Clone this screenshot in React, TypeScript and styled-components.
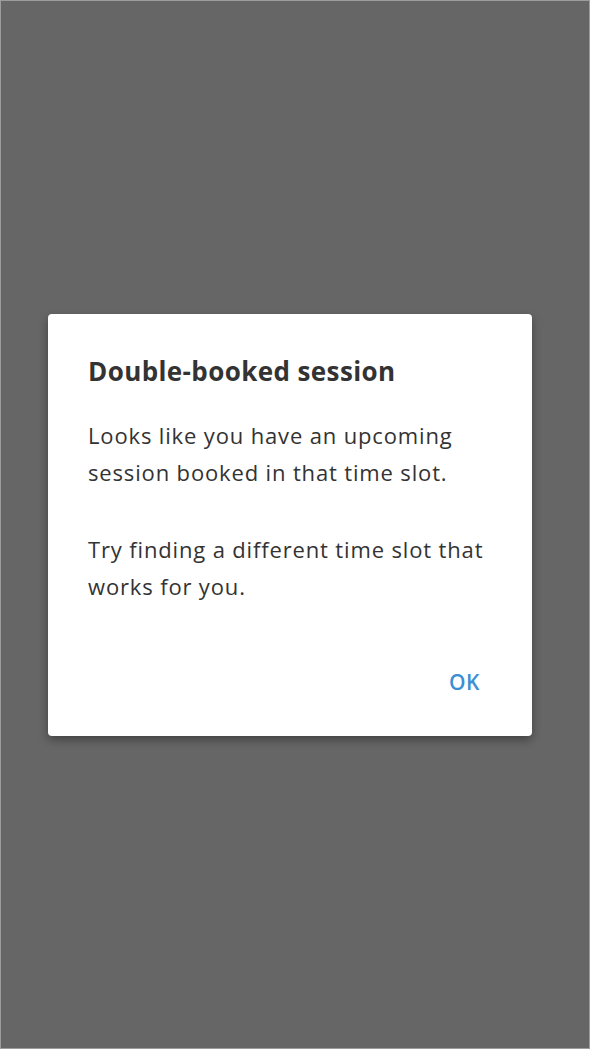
import styled, { createGlobalStyle } from "styled-components";

const GlobalStyle = createGlobalStyle`
    html, body {
        margin: 0;
        padding: 0;
        background: #666666;
    }
    * {
        box-sizing: border-box;
    }
`;

const Frame = styled.div`
    width: 590px;
    height: 1049px;
    border: 1px solid #9c9c9c;
    background: #666666;
    display: flex;
    align-items: center;
    justify-content: center;
    padding: 0 57px 0 47px;
`;

const Dialog = styled.div`
    width: 484px;
    height: 422px;
    background: #ffffff;
    border-radius: 4px;
    box-shadow: rgba(0, 0, 0, 0.35) 0px 4px 10px;
    padding: 40px 40px 40px 40px;
    display: flex;
    flex-direction: column;
    font-family: "Open Sans", "Noto Sans", sans-serif;
    color: #333333;
`;

const Title = styled.h1`
    margin: 0 0 29px;
    font-size: 26px;
    line-height: 34px;
    font-weight: 700;
    letter-spacing: 0.4px;
    color: #333333;
`;

const Message = styled.p`
    margin: 0 0 40px;
    font-size: 22px;
    line-height: 37px;
    font-weight: 400;
    letter-spacing: 0.85px;
`;

const Actions = styled.div`
    display: flex;
    justify-content: flex-end;
    margin-top: auto;
    padding-right: 12px;
`;

const TextButton = styled.button`
    border: none;
    background: transparent;
    padding: 0;
    font-family: inherit;
    font-size: 21px;
    font-weight: 600;
    letter-spacing: 0.5px;
    color: #3b8fd4;
    cursor: pointer;
`;

const App = () => {
    return (
        <>
            <GlobalStyle />
            <Frame>
                <Dialog>
                    <Title>Double-booked session</Title>
                    <Message>Looks like you have an upcoming session booked in that time slot.</Message>
                    <Message>Try finding a different time slot that works for you.</Message>
                    <Actions>
                        <TextButton>OK</TextButton>
                    </Actions>
                </Dialog>
            </Frame>
        </>
    );
};

export default App;
